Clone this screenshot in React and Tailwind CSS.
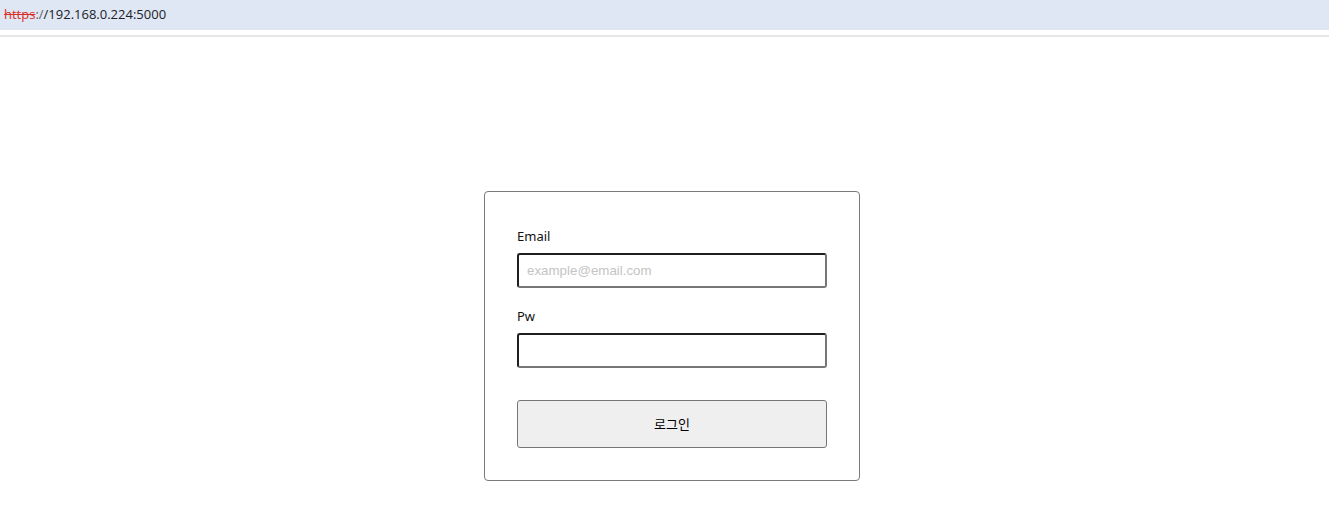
export default function App() {
  return (
    <div className="min-h-[515px] bg-white">
      <div className="h-[30px] bg-[#dfe7f5] flex items-center pl-[4px] text-[13px] font-['Open_Sans','Noto_Sans',sans-serif]">
        <span className="text-[#d93025] line-through">https</span>
        <span className="text-[#5f6368]">:/</span>
        <span className="text-[#202124]">/192.168.0.224:5000</span>
      </div>
      <div className="h-[5px]" />
      <div className="h-[2px] bg-[#e6e6e6]" />
      <div className="flex justify-center pl-[15px] pt-[154px] font-['Noto_Sans','Noto_Sans_CJK_KR',sans-serif]">
        <div className="w-[376px] border border-[#7a7a7a] rounded-[4px] p-[32px] flex flex-col">
          <label className="h-[25px] pt-[1px] flex items-center text-[13px] text-[#111] mb-[4px]">Email</label>
          <input
            type="text"
            placeholder="example@email.com"
            className="h-[35px] w-full border-2 border-t-[#1f1f1f] border-l-[#1f1f1f] border-b-[#767676] border-r-[#767676] rounded-[3px] px-[8px] text-[13.33px] font-['Liberation_Sans',Arial,sans-serif] placeholder:text-[#c4c4c4] outline-none"
          />
          <label className="h-[25px] pt-[1px] flex items-center text-[13px] text-[#111] mt-[16px] mb-[4px]">Pw</label>
          <input
            type="password"
            className="h-[35px] w-full border-2 border-t-[#1f1f1f] border-l-[#1f1f1f] border-b-[#767676] border-r-[#767676] rounded-[3px] px-[8px] text-[13.33px] font-['Liberation_Sans',Arial,sans-serif] outline-none"
          />
          <button className="mt-[32px] h-[48px] w-full bg-[#efefef] border border-[#767676] rounded-[3px] text-[13px] text-black font-['Noto_Sans_CJK_KR',sans-serif]">
            로그인
          </button>
        </div>
      </div>
    </div>
  );
}
